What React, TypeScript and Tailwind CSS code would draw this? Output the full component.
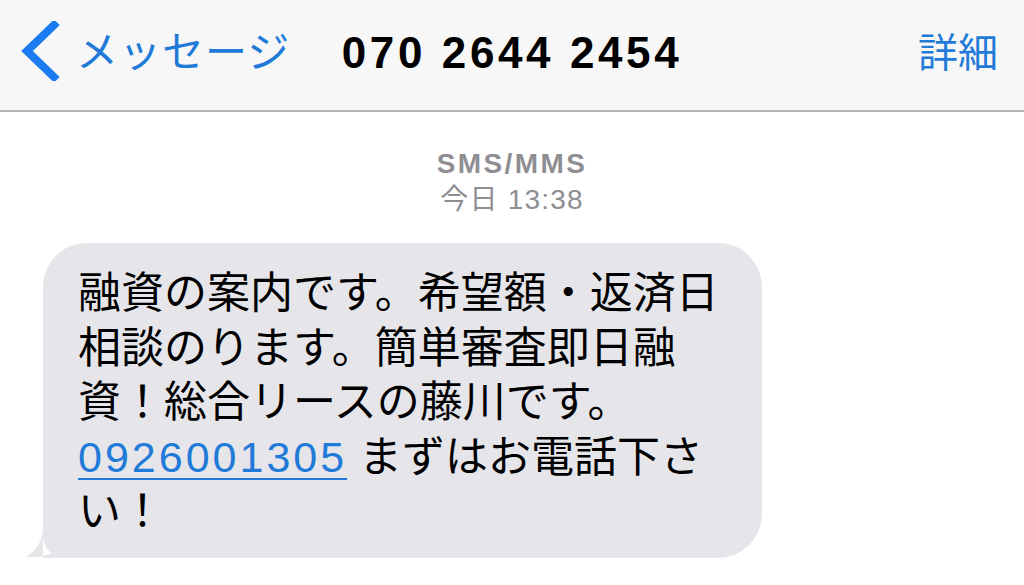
import React from 'react';

const jp = { fontFamily: '"Liberation Sans", "Noto Sans CJK JP", sans-serif' };

function Chevron() {
  return (
    <svg width="40" height="60" viewBox="0 0 40 60" className="absolute left-[20px] top-[21px]">
      <polyline points="34,4 7,30 34,56" fill="none" stroke="#1a7cf0" strokeWidth="8" strokeLinecap="square" strokeLinejoin="miter" />
    </svg>
  );
}

function Tail() {
  return (
    <svg width="44" height="44" viewBox="0 0 44 44" className="absolute left-[-17px] bottom-0">
      <path d="M17,0 L17,12 C17,27 11,36 0,43 C12,44 24,41 33,35 C36,39 40,43 44,44 L17,44 Z" fill="#e5e5ea" />
    </svg>
  );
}

export default function App() {
  return (
    <div className="w-[1024px] h-[585px] bg-white overflow-hidden" style={jp}>
      <header className="relative h-[112px] bg-[#f7f7f7] border-b-2 border-[#b4b4b4] grid grid-cols-[1fr_auto_1fr] items-center pb-[4px]">
        <Chevron />
        <div className="pl-[76px] text-[42px] leading-none text-[#1f7ad8] tracking-[1px]">メッセージ</div>
        <div className="text-[44px] leading-none font-bold text-black tracking-[3.6px]">070 2644 2454</div>
        <div className="justify-self-end pr-[26px] text-[40px] leading-none text-[#1f7ad8]">詳細</div>
      </header>

      <div className="flex flex-col items-center pt-[34px] text-[#8e8e93] text-[28px] leading-[36px]">
        <div className="font-bold tracking-[2.4px]">SMS/MMS</div>
        <div className="tracking-[1.2px]">今日 13:38</div>
      </div>

      <div className="pl-[43px] pt-[25px]">
        <div className="relative w-[719px] h-[315px] bg-[#e5e5ea] rounded-[44px] rounded-bl-[22px] pl-[35px] pt-[23px] text-[43px] leading-[54.5px] text-black">
          <Tail />
          融資の案内です。希望額・返済日<br />
          相談のります。簡単審査即日融<br />
          資！総合リースの藤川です。<br />
          <span className="text-[#1f7ad8] underline decoration-[2px] underline-offset-[6px] tracking-[3px]">0926001305</span> まずはお電話下さ<br />
          い！
        </div>
      </div>
    </div>
  );
}
